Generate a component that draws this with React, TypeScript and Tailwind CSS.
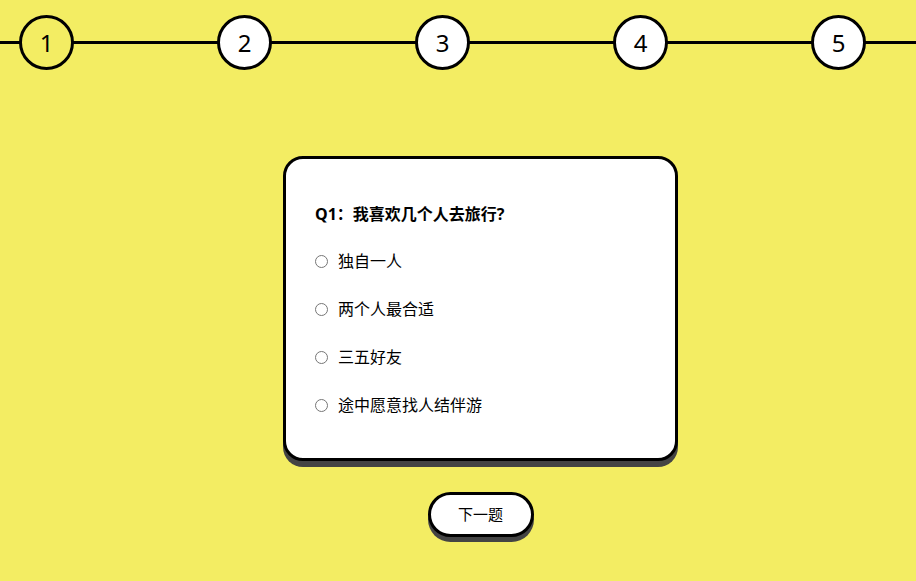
import { useState } from 'react'

const steps = [1, 2, 3, 4, 5]
const options = ['独自一人', '两个人最合适', '三五好友', '途中愿意找人结伴游']

export default function App() {
  const [picked, setPicked] = useState<number | null>(null)

  return (
    <div className="min-h-screen bg-[#f3ed63] font-['Noto_Sans','Noto_Sans_CJK_SC',sans-serif] text-black">
      {/* step bar */}
      <div className="relative pt-[15px]">
        <div className="absolute left-0 right-0 top-[41px] h-[3px] bg-black" />
        <div className="relative flex gap-[143px] pl-[19px]">
          {steps.map((n) => (
            <div
              key={n}
              className={`flex h-[55px] w-[55px] shrink-0 items-center justify-center rounded-full border-[3px] border-black text-[24px] ${
                n === 1 ? 'bg-[#f3ed63]' : 'bg-white'
              }`}
            >
              {n}
            </div>
          ))}
        </div>
      </div>

      <div className="flex flex-col items-center pl-[45px]">
        <div className="mt-[86px] w-[395px] rounded-[20px] border-[3px] border-black bg-white px-[29px] pb-[41px] pt-[43px] shadow-[0_6px_0_#444]">
          <h2 className="text-[16px] font-bold leading-[24px]">Q1：我喜欢几个人去旅行?</h2>
          <div className="mt-[23px] flex flex-col gap-[24px]">
            {options.map((o, i) => (
              <label key={o} className="flex h-[24px] items-center text-[16px] leading-[24px]">
                <input
                  type="radio"
                  name="q1"
                  checked={picked === i}
                  onChange={() => setPicked(i)}
                  className="m-0 h-[13px] w-[13px]"
                />
                <span className="ml-[10px]">{o}</span>
              </label>
            ))}
          </div>
        </div>

        <button className="mt-[31px] h-[45px] w-[106px] rounded-full border-[3px] border-black bg-white text-[15px] shadow-[0_5px_0_#444]">
          下一题
        </button>
      </div>
    </div>
  )
}
